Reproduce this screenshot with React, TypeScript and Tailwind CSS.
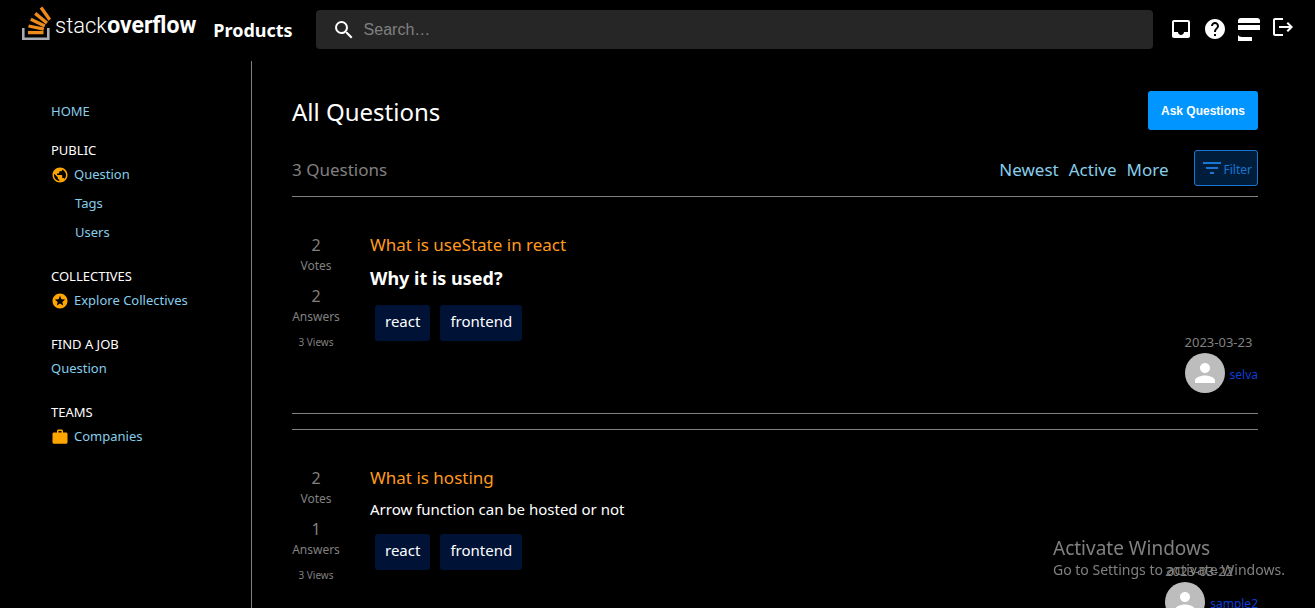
import React from "react";
import {
  MdFilterList,
  MdHelp,
  MdInbox,
  MdLogout,
  MdPerson,
  MdPublic,
  MdSearch,
  MdStars,
  MdWork,
} from "react-icons/md";

type Question = {
  title: string;
  body: string;
  heading: boolean;
  votes: number;
  answers: number;
  views: number;
  tags: string[];
  date: string;
  user: string;
};

const questions: Question[] = [
  {
    title: "What is useState in react",
    body: "Why it is used?",
    heading: true,
    votes: 2,
    answers: 2,
    views: 3,
    tags: ["react", "frontend"],
    date: "2023-03-23",
    user: "selva",
  },
  {
    title: "What is hosting",
    body: "Arrow function can be hosted or not",
    heading: false,
    votes: 2,
    answers: 1,
    views: 3,
    tags: ["react", "frontend"],
    date: "2023-03-22",
    user: "sample2",
  },
];

function Logo() {
  return (
    <a href="#home" className="flex items-start text-white">
      <svg width="30" height="36" viewBox="0 0 30 36" aria-hidden="true">
        <path d="M1.3 22v10.700h25V22" fill="none" stroke="#a9abb0" strokeWidth="2.600" />
        <g stroke="#ef8a1d" strokeWidth="3.300">
          <path d="M6 26.600h15.500" />
          <path d="M6.500 20l15.300 3.200" />
          <path d="M8.800 13.300l14 6.600" />
          <path d="M13.200 7.400l11.800 9.600" />
          <path d="M19 1.500l8.800 12.200" />
        </g>
      </svg>
      <span className="ml-[3px] mt-[6px] font-['Roboto',sans-serif] text-[22px] leading-7">
        <span className="font-light">stack</span>
        <span className="text-[23px] font-bold">overflow</span>
      </span>
    </a>
  );
}

function StackExchangeIcon() {
  return (
    <svg width="22" height="25" viewBox="0 -1 22 25" fill="currentColor" aria-hidden="true">
      <path d="M0 5V3a3 3 0 0 1 3-3h16a3 3 0 0 1 3 3v2z" />
      <path d="M0 7h22v5H0z" />
      <path d="M0 17q1 2 4 2h10v4H0z" />
    </svg>
  );
}

function Header() {
  return (
    <header className="flex h-[61px] shrink-0 items-start pl-[22px] pr-5">
      <div className="pt-[6px]">
        <Logo />
      </div>
      <a href="#products" className="ml-[17px] pt-[18px] text-[18px] font-bold leading-6 text-white">
        Products
      </a>
      <label className="ml-[23px] mt-[10px] flex h-[39px] flex-1 items-center rounded-[4px] bg-[#262626] pl-4">
        <MdSearch size={24} aria-hidden="true" />
        <input
          type="text"
          aria-label="Search"
          placeholder="Search…"
          className="ml-2 min-w-0 flex-1 bg-transparent font-['Liberation_Sans',Arial,sans-serif] text-[16px] text-white outline-none placeholder:text-[#808080]"
        />
      </label>
      <nav aria-label="Account" className="ml-4 flex items-start gap-[10px] pt-[17px]">
        <button aria-label="Inbox"><MdInbox size={24} /></button>
        <button aria-label="Help"><MdHelp size={24} /></button>
        <button aria-label="Communities" className="px-px"><StackExchangeIcon /></button>
        <button aria-label="Log out" className="-mt-[2px]"><MdLogout size={24} /></button>
      </nav>
    </header>
  );
}

function Sidebar() {
  const link = "flex h-6 items-center pt-0.5 text-[#87ceeb]";
  const heading = "h-6 leading-6 text-white";
  return (
    <nav
      aria-label="Main"
      className="flex w-[252px] shrink-0 flex-col gap-5 border-r border-[#808080] pl-[51px] pt-[38px] text-[13px]"
    >
      <div className="-mb-[5px]">
        <a href="#home" className={link}>HOME</a>
      </div>
      <section>
        <h2 className={heading}>PUBLIC</h2>
        <div className="flex flex-col gap-[5px]">
          <a href="#question" className={link}>
            <MdPublic size={18} className="mr-[5px] text-[#ffa500]" />
            Question
          </a>
          <a href="#tags" className={`${link} pl-6`}>Tags</a>
          <a href="#users" className={`${link} pl-6`}>Users</a>
        </div>
      </section>
      <section>
        <h2 className={heading}>COLLECTIVES</h2>
        <a href="#collectives" className={link}>
          <MdStars size={18} className="mr-[5px] text-[#ffa500]" />
          Explore Collectives
        </a>
      </section>
      <section>
        <h2 className={heading}>FIND A JOB</h2>
        <a href="#jobs" className={link}>Question</a>
      </section>
      <section>
        <h2 className={heading}>TEAMS</h2>
        <a href="#companies" className={link}>
          <MdWork size={18} className="mr-[5px] text-[#ffa500]" />
          Companies
        </a>
      </section>
    </nav>
  );
}

function QuestionRow({ q }: { q: Question }) {
  return (
    <article className="mb-[15px] flex border-y border-[#808080] pb-5 pt-9 first:border-t-0">
      <div className="w-12 shrink-0 text-center text-[#808080]">
        <p className="text-[16px] leading-6">{q.votes}</p>
        <p className="text-[12px] leading-[18px]">Votes</p>
        <p className="mt-[9px] text-[16px] leading-6">{q.answers}</p>
        <p className="text-[12px] leading-[18px]">Answers</p>
        <p className="mt-2 text-[10px] leading-4">{q.views} Views</p>
      </div>
      <div className="ml-[30px] flex-1">
        <a href="#question" className="block text-[17px] leading-6 text-[#ff9a1f]">{q.title}</a>
        {q.heading ? (
          <h3 className="mt-2 text-[18px] font-bold leading-[26px] text-white">{q.body}</h3>
        ) : (
          <p className="mt-2 text-[15px] leading-[22px] text-white">{q.body}</p>
        )}
        <ul className="ml-[5px] mt-[14px] flex gap-[10px]">
          {q.tags.map((tag) => (
            <li key={tag} className="h-9 rounded-[3px] bg-[#001337] px-[10px] text-[15px] leading-8 text-white">
              {tag}
            </li>
          ))}
        </ul>
        <div className="-mt-[10px] flex justify-end">
          <div>
            <p className="pt-0.5 text-[13px] leading-[18px] text-[#808080]">{q.date}</p>
            <a href="#user" className="mt-0.5 flex items-center gap-[5px] text-[12px] text-[#0b3fd8]">
              <span className="flex size-10 items-center justify-center rounded-full bg-[#bdbdbd] text-white">
                <MdPerson size={30} />
              </span>
              <span className="pt-[3px]">{q.user}</span>
            </a>
          </div>
        </div>
      </div>
    </article>
  );
}

export default function App() {
  const tab = "text-[17px] text-[#87ceeb]";
  return (
    <div className="flex h-screen flex-col overflow-hidden bg-black font-['Noto_Sans','Open_Sans',sans-serif] text-white">
      <Header />
      <div className="flex min-h-0 flex-1">
        <Sidebar />
        <main className="min-w-0 flex-1 overflow-y-auto pl-10 pr-[57px] pt-[30px] [scrollbar-width:none]">
          <div className="flex items-center justify-between">
            <h1 className="pt-0.5 text-[24px] leading-[37px]">All Questions</h1>
            <button className="h-[39px] rounded-[3px] bg-[#0095ff] px-[13px] font-['Liberation_Sans',Arial,sans-serif] text-[12px] font-bold text-white">
              Ask Questions
            </button>
          </div>
          <div className="mt-5 flex items-center border-b border-[#808080] pb-[10px]">
            <p className="flex-1 pt-[3px] text-[17px] text-[#808080]">3 Questions</p>
            <div className="flex gap-[10px] pt-[3px]">
              <button className={tab}>Newest</button>
              <button className={tab}>Active</button>
              <button className={tab}>More</button>
            </div>
            <button className="ml-[25px] flex h-9 items-center rounded-[3px] border border-[#1976d2] bg-[#001e3c] px-[5px] text-[12px] text-[#1976d2]">
              <MdFilterList size={24} />
              <span className="pt-[3px]">Filter</span>
            </button>
          </div>
          <div>
            {questions.map((q) => (
              <QuestionRow key={q.title} q={q} />
            ))}
          </div>
        </main>
      </div>
      <aside className="pointer-events-none fixed bottom-7 right-[26px] min-w-[236px] text-[#808080]">
        <p className="text-[19px] leading-6">Activate Windows</p>
        <p className="text-[14px] leading-5">Go to Settings to activate Windows.</p>
      </aside>
    </div>
  );
}
